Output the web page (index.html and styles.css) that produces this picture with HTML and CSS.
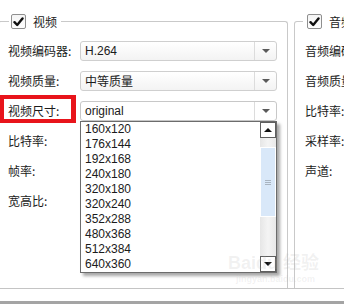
FILE: index.html
```html
<!DOCTYPE html>
<html lang="zh-CN">
<head>
<meta charset="utf-8">
<link rel="stylesheet" href="styles.css">
</head>
<body>
<div class="page">
  <div class="groups">
    <section class="group group-video">
      <div class="legend">
        <span class="cb"><svg width="11" height="10" viewBox="0 0 11 10"><path d="M1.5 5.2 L4.2 8 L9.5 1.5" fill="none" stroke="#111" stroke-width="2.4" stroke-linecap="round" stroke-linejoin="round"/></svg></span>
        <span class="legend-text">视频</span>
      </div>
      <div class="row">
        <span class="label">视频编码器:</span>
        <div class="combo"><span class="combo-text latin">H.264</span><span class="combo-btn"><i class="arrow"></i></span></div>
      </div>
      <div class="row">
        <span class="label">视频质量:</span>
        <div class="combo"><span class="combo-text">中等质量</span><span class="combo-btn"><i class="arrow"></i></span></div>
      </div>
      <div class="row">
        <span class="label">视频尺寸:</span>
        <div class="combo combo-open"><span class="combo-text latin">original</span><span class="combo-btn"><i class="arrow"></i></span>
          <div class="dropdown">
            <ul class="options">
              <li>160x120</li>
              <li>176x144</li>
              <li>192x168</li>
              <li>240x180</li>
              <li>320x180</li>
              <li>320x240</li>
              <li>352x288</li>
              <li>480x368</li>
              <li>512x384</li>
              <li>640x360</li>
            </ul>
            <div class="scrollbar">
              <div class="sb-btn"><i class="tri-up"></i></div>
              <div class="sb-track">
                <div class="sb-thumb"><i class="grip"></i></div>
              </div>
              <div class="sb-btn"><i class="tri-down"></i></div>
            </div>
          </div>
        </div>
      </div>
      <div class="row"><span class="label">比特率:</span></div>
      <div class="row"><span class="label">帧率:</span></div>
      <div class="row"><span class="label">宽高比:</span></div>
    </section>
    <section class="group group-audio">
      <div class="legend">
        <span class="cb"><svg width="11" height="10" viewBox="0 0 11 10"><path d="M1.5 5.2 L4.2 8 L9.5 1.5" fill="none" stroke="#111" stroke-width="2.4" stroke-linecap="round" stroke-linejoin="round"/></svg></span>
        <span class="legend-text">音频</span>
      </div>
      <div class="row"><span class="label">音频编码器:</span></div>
      <div class="row"><span class="label">音频质量:</span></div>
      <div class="row"><span class="label">比特率:</span></div>
      <div class="row"><span class="label">采样率:</span></div>
      <div class="row"><span class="label">声道:</span></div>
    </section>
  </div>
  <div class="separator"></div>
  <div class="bottom-bar"></div>
  <div class="annotation"></div>
  <div class="watermark">
    <span class="wm-logo">Baidu 经验</span>
    <span class="wm-url">jingyan.baidu.com</span>
  </div>
</div>
</body>
</html>
```
FILE: styles.css
```css
html, body {
  margin: 0;
  padding: 0;
  background: #ffffff;
}
body {
  width: 344px;
  height: 304px;
  overflow: hidden;
  font-family: "Noto Sans CJK SC", "Liberation Sans", sans-serif;
  font-size: 12px;
  color: #1b1b1b;
}
.page {
  position: relative;
  width: 344px;
  height: 304px;
  overflow: hidden;
  display: flex;
  flex-direction: column;
}
.groups {
  display: flex;
  gap: 6px;
  margin-top: 21px;
  margin-left: -2px;
  height: 268px;
}
.group {
  position: relative;
  border: 1px solid #c9c9c9;
  border-bottom: none;
  border-radius: 3px 3px 0 0;
  box-sizing: border-box;
  padding-top: 14px;
}
.group-video {
  width: 290px;
  flex: none;
  padding-left: 9px;
  padding-right: 10px;
}
.group-audio {
  width: 80px;
  flex: none;
  padding-left: 10px;
}
.legend {
  position: absolute;
  top: -9px;
  left: 10px;
  height: 17px;
  display: flex;
  align-items: center;
  gap: 7px;
  padding: 0 4px 0 2px;
  background: #ffffff;
}
.group-audio .legend {
  left: 8px;
  padding-left: 4px;
}
.cb {
  width: 13px;
  height: 13px;
  border: 1px solid #8f8f8f;
  border-radius: 2px;
  background: linear-gradient(#f4f4f4, #ffffff);
  display: flex;
  align-items: center;
  justify-content: center;
}
.legend-text {
  line-height: 17px;
  white-space: nowrap;
}
.row {
  height: 30px;
  display: flex;
  align-items: center;
}
.label {
  width: 72px;
  flex: none;
  white-space: nowrap;
  line-height: 16px;
}
.combo {
  position: relative;
  width: 197px;
  height: 20px;
  box-sizing: border-box;
  border: 1px solid #cfcfcf;
  border-radius: 3px;
  background: linear-gradient(#ffffff, #f3f3f3);
  display: flex;
  align-items: center;
}
.combo-text {
  flex: 1;
  padding-left: 4px;
  line-height: 18px;
  white-space: nowrap;
}
.latin {
  font-family: "Liberation Sans", Arial, sans-serif;
}
.combo-btn {
  width: 21px;
  height: 18px;
  border-left: 1px solid #dcdcdc;
  display: flex;
  align-items: center;
  justify-content: center;
}
.arrow {
  width: 0;
  height: 0;
  border-left: 4px solid transparent;
  border-right: 4px solid transparent;
  border-top: 4px solid #5a5a5a;
}
.combo-open {
  background: #ffffff;
  border-color: #c8c8c8;
}
.dropdown {
  position: absolute;
  left: -1px;
  top: 19px;
  width: 197px;
  height: 152px;
  box-sizing: border-box;
  border: 1px solid #6c6c6c;
  background: #ffffff;
  box-shadow: 3px 3px 3px rgba(0, 0, 0, 0.35);
  display: flex;
  z-index: 2;
}
.options {
  list-style: none;
  margin: 0;
  padding: 0;
  flex: 1;
  font-family: "Liberation Sans", Arial, sans-serif;
  font-size: 12px;
}
.options li {
  height: 15px;
  line-height: 15px;
  padding-left: 4px;
}
.scrollbar {
  width: 16px;
  display: flex;
  flex-direction: column;
  background: linear-gradient(90deg, #e6e6e6, #f4f4f4 50%, #e9e9e9);
}
.sb-btn {
  height: 16px;
  box-sizing: border-box;
  border: 1px solid #5f5f5f;
  background: #ffffff;
  display: flex;
  align-items: center;
  justify-content: center;
}
.tri-up {
  width: 0;
  height: 0;
  border-left: 4px solid transparent;
  border-right: 4px solid transparent;
  border-bottom: 4px solid #111;
}
.tri-down {
  width: 0;
  height: 0;
  border-left: 4px solid transparent;
  border-right: 4px solid transparent;
  border-top: 4px solid #111;
}
.sb-track {
  flex: 1;
  padding-top: 9px;
}
.sb-thumb {
  height: 70px;
  box-sizing: border-box;
  border: 1px solid #ffffff;
  background: #d9e8f9;
  display: flex;
  align-items: center;
  justify-content: center;
}
.grip {
  width: 6px;
  height: 5px;
  border-top: 1px solid #a9b4c0;
  border-bottom: 1px solid #a9b4c0;
  box-sizing: border-box;
  background: linear-gradient(#a9b4c0, #a9b4c0) center / 6px 1px no-repeat;
}
.separator {
  height: 1px;
  background: #c4c4c4;
}
.bottom-bar {
  margin-top: 12px;
  height: 3px;
  background: #a4a4a4;
}
.annotation {
  position: absolute;
  left: -1px;
  top: 95px;
  width: 77px;
  height: 28px;
  box-sizing: border-box;
  border: 5px solid #e8141b;
  border-top-width: 4px;
  border-bottom-width: 4px;
  pointer-events: none;
}
.watermark {
  position: absolute;
  left: 228px;
  top: 253px;
  display: flex;
  flex-direction: column;
  color: rgba(170, 170, 170, 0.16);
  font-weight: bold;
  pointer-events: none;
  z-index: 3;
}
.wm-logo {
  font-family: "Liberation Sans", "Noto Sans CJK SC", sans-serif;
  font-size: 18px;
  line-height: 20px;
}
.wm-url {
  font-family: "Liberation Sans", sans-serif;
  font-size: 9px;
  line-height: 12px;
  margin-left: 8px;
}
```
